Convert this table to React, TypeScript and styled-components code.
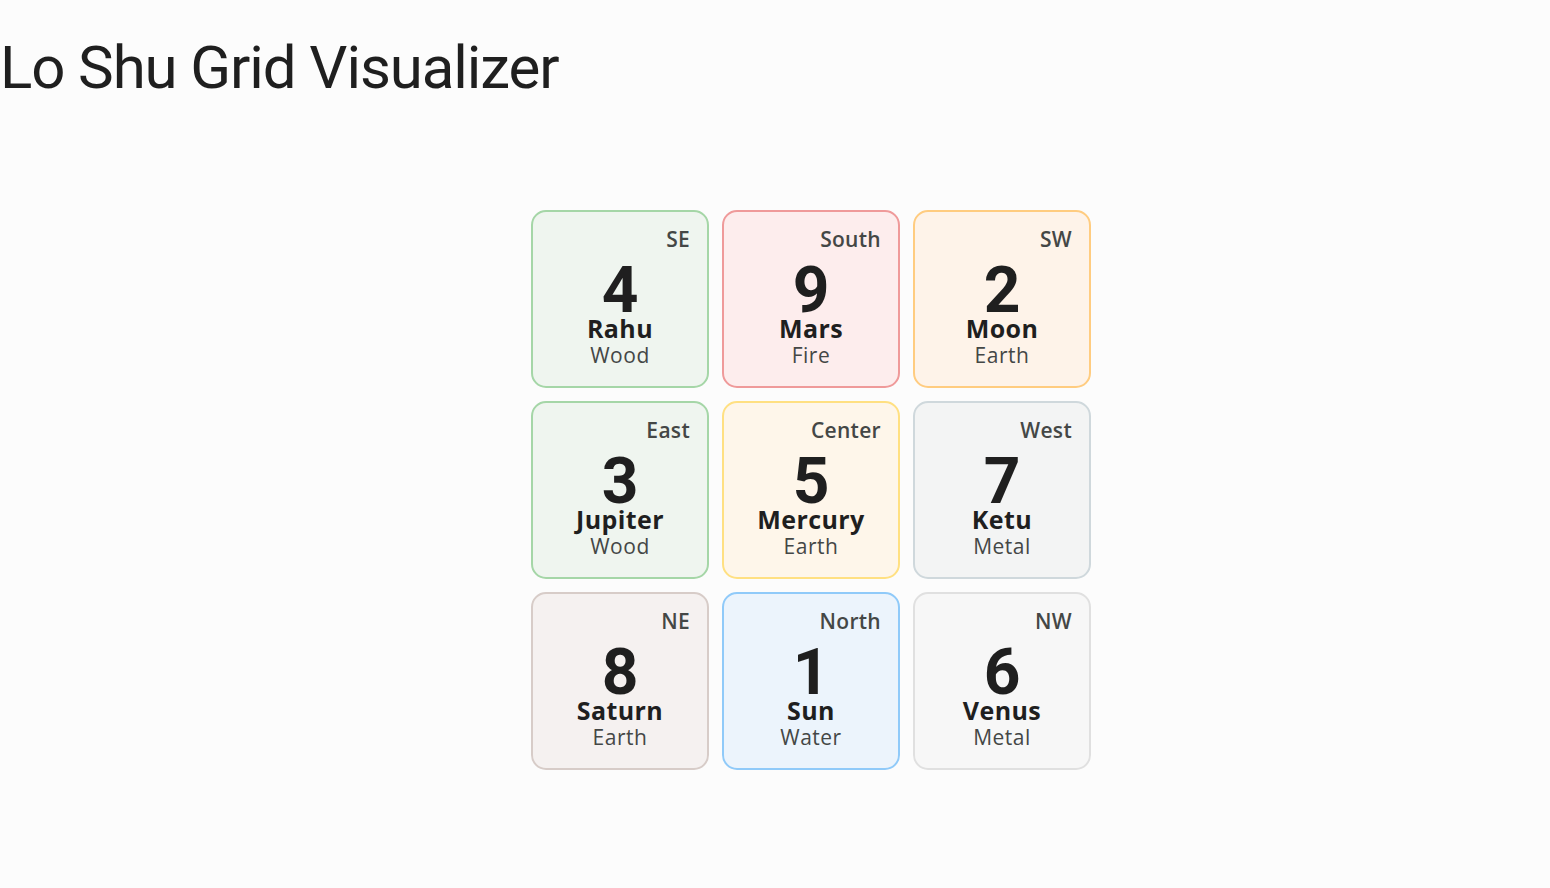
import React from "react";
import styled, { createGlobalStyle } from "styled-components";

const GlobalStyle = createGlobalStyle`
  html, body {
    margin: 0;
    padding: 0;
    background: #fcfcfc;
    font-family: Roboto, "Noto Sans", "Liberation Sans", sans-serif;
    color: #1f1f1f;
  }
`;

const Page = styled.main`
  min-height: 888px;
  box-sizing: border-box;
  padding-top: 32px;
`;

const Title = styled.h1`
  margin: 0;
  font-size: 60px;
  line-height: 72px;
  font-weight: 400;
  color: #1f1f1f;
  letter-spacing: -1.1px;
`;

const Stage = styled.section`
  display: flex;
  justify-content: center;
  padding-left: 72px;
  margin-top: 106px;
`;

const Grid = styled.div`
  display: grid;
  grid-template-columns: repeat(3, 178px);
  grid-auto-rows: 178px;
  gap: 13px;
`;

const Card = styled.div<{ $bg: string; $border: string }>`
  box-sizing: border-box;
  display: flex;
  flex-direction: column;
  align-items: center;
  padding: 14px 17px 0;
  border-radius: 15px;
  border: 2px solid ${(p) => p.$border};
  background: ${(p) => p.$bg};
  font-family: "Open Sans", Roboto, sans-serif;
`;

const Direction = styled.div`
  align-self: stretch;
  text-align: right;
  font-size: 21px;
  line-height: 27px;
  letter-spacing: 0.3px;
  font-weight: 600;
  color: #444746;
`;

const Number = styled.div`
  margin-top: 14px;
  font-family: Roboto, sans-serif;
  font-size: 64px;
  line-height: 48px;
  font-weight: 700;
  color: #1f1f1f;
`;

const Planet = styled.div`
  font-size: 25px;
  line-height: 27px;
  letter-spacing: 0.4px;
  font-weight: 700;
  color: #1f1f1f;
`;

const Element = styled.div`
  font-size: 21px;
  line-height: 24px;
  letter-spacing: 0.5px;
  font-weight: 400;
  color: #444746;
  margin-top: 1px;
`;

type Cell = {
  dir: string;
  num: number;
  planet: string;
  element: string;
  bg: string;
  border: string;
};

const cells: Cell[] = [
  { dir: "SE", num: 4, planet: "Rahu", element: "Wood", bg: "#eff5ef", border: "#a5d6a7" },
  { dir: "South", num: 9, planet: "Mars", element: "Fire", bg: "#fdeded", border: "#ef9a9a" },
  { dir: "SW", num: 2, planet: "Moon", element: "Earth", bg: "#fef3e9", border: "#ffcc80" },
  { dir: "East", num: 3, planet: "Jupiter", element: "Wood", bg: "#eff5ef", border: "#a5d6a7" },
  { dir: "Center", num: 5, planet: "Mercury", element: "Earth", bg: "#fef6ea", border: "#ffe082" },
  { dir: "West", num: 7, planet: "Ketu", element: "Metal", bg: "#f3f4f4", border: "#cfd8dc" },
  { dir: "NE", num: 8, planet: "Saturn", element: "Earth", bg: "#f5f1f0", border: "#d7ccc8" },
  { dir: "North", num: 1, planet: "Sun", element: "Water", bg: "#ecf4fc", border: "#90caf9" },
  { dir: "NW", num: 6, planet: "Venus", element: "Metal", bg: "#f7f7f7", border: "#e0e0e0" },
];

export default function App() {
  return (
    <>
      <GlobalStyle />
      <Page>
        <Title>Lo Shu Grid Visualizer</Title>
        <Stage>
          <Grid>
            {cells.map((c) => (
              <Card key={c.dir} $bg={c.bg} $border={c.border}>
                <Direction>{c.dir}</Direction>
                <Number>{c.num}</Number>
                <Planet>{c.planet}</Planet>
                <Element>{c.element}</Element>
              </Card>
            ))}
          </Grid>
        </Stage>
      </Page>
    </>
  );
}
